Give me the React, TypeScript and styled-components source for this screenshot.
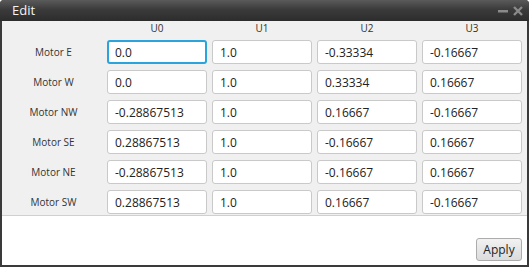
import React from 'react';
import styled, { createGlobalStyle } from 'styled-components';

const GlobalStyle = createGlobalStyle`
  html, body {
    margin: 0;
    padding: 0;
    background: #ffffff;
  }
  body {
    font-family: "Open Sans", "Noto Sans", sans-serif;
  }
`;

const Window = styled.div`
  width: 529px;
  height: 267px;
  box-sizing: border-box;
  display: flex;
  flex-direction: column;
  background: #3a3a3a;
  border-radius: 4px 4px 0 0;
  padding: 0 2px 2px 2px;
  overflow: hidden;
`;

const TitleBar = styled.div`
  height: 21px;
  flex: none;
  display: flex;
  align-items: center;
  justify-content: space-between;
  padding: 0 6px 0 12px;
  background: linear-gradient(to bottom, #5a5a5a 0%, #3b3b3b 45%, #2c2c2c 100%);
  margin: 0 -2px;
`;

const Title = styled.span`
  color: #f4f4f4;
  font-size: 13px;
  line-height: 21px;
`;

const TitleButtons = styled.div`
  display: flex;
  align-items: center;
  gap: 5px;
`;

const Panel = styled.div`
  background: #f0f0f0;
  border-bottom: 1px solid #d0d0d0;
  padding: 0 5px 1px 0;
  display: grid;
  grid-template-columns: 100px repeat(4, 100px);
  column-gap: 5px;
  row-gap: 6px;
  align-items: center;
`;

const HeaderCell = styled.div`
  height: 13px;
  margin-top: 1px;
  margin-bottom: -1px;
  font-size: 10px;
  line-height: 13px;
  color: #333;
  text-align: center;
`;

const RowLabel = styled.div`
  font-size: 10px;
  color: #333;
  text-align: center;
  padding-left: 3px;
`;

const Cell = styled.input<{ $focused?: boolean }>`
  box-sizing: border-box;
  width: 100px;
  height: 24px;
  margin: 0;
  padding: 0 ${p => (p.$focused ? 6 : 7)}px;
  border: ${p => (p.$focused ? '2px solid #2ba3dc' : '1px solid #c9c9c9')};
  border-radius: 3px;
  background: #ffffff;
  font-family: "Open Sans", "Noto Sans", sans-serif;
  font-size: 12px;
  color: #222;
  outline: none;
`;

const Footer = styled.div`
  flex: 1;
  background: #ffffff;
  display: flex;
  align-items: flex-end;
  justify-content: flex-end;
  padding: 0 5px 4px 0;
`;

const ApplyButton = styled.button`
  width: 46px;
  height: 23px;
  padding: 0;
  border: 1px solid #acacac;
  border-radius: 3px;
  background: linear-gradient(to bottom, #f2f2f2 0%, #e6e6e6 50%, #dcdcdc 100%);
  font-family: "Open Sans", "Noto Sans", sans-serif;
  font-size: 12px;
  color: #222;
`;

const columns = ['U0', 'U1', 'U2', 'U3'];

const rows: { name: string; values: string[] }[] = [
  { name: 'Motor E', values: ['0.0', '1.0', '-0.33334', '-0.16667'] },
  { name: 'Motor W', values: ['0.0', '1.0', '0.33334', '0.16667'] },
  { name: 'Motor NW', values: ['-0.28867513', '1.0', '0.16667', '-0.16667'] },
  { name: 'Motor SE', values: ['0.28867513', '1.0', '-0.16667', '0.16667'] },
  { name: 'Motor NE', values: ['-0.28867513', '1.0', '-0.16667', '0.16667'] },
  { name: 'Motor SW', values: ['0.28867513', '1.0', '0.16667', '-0.16667'] },
];

const App: React.FC = () => {
  return (
    <>
      <GlobalStyle />
      <Window>
        <TitleBar>
          <Title>Edit</Title>
          <TitleButtons>
            <svg width="10" height="10" viewBox="0 0 10 10">
              <rect x="0" y="4" width="10" height="2.5" fill="#8a8a8a" />
            </svg>
            <svg width="10" height="10" viewBox="0 0 10 10">
              <path d="M1 1 L9 9 M9 1 L1 9" stroke="#8a8a8a" strokeWidth="2.4" />
            </svg>
          </TitleButtons>
        </TitleBar>
        <Panel>
          <HeaderCell />
          {columns.map(c => (
            <HeaderCell key={c}>{c}</HeaderCell>
          ))}
          {rows.map((row, r) => (
            <React.Fragment key={row.name}>
              <RowLabel>{row.name}</RowLabel>
              {row.values.map((v, i) => (
                <Cell key={i} defaultValue={v} $focused={r === 0 && i === 0} readOnly />
              ))}
            </React.Fragment>
          ))}
        </Panel>
        <Footer>
          <ApplyButton>Apply</ApplyButton>
        </Footer>
      </Window>
    </>
  );
};

export default App;
